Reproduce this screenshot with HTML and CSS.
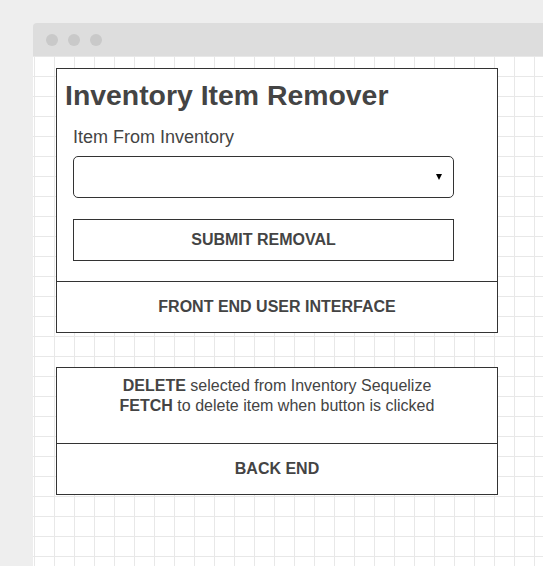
FILE: index.html
```html
<!DOCTYPE html>
<html lang="en">
<head>
<meta charset="utf-8">
<title>Inventory Item Remover</title>
<link rel="stylesheet" href="styles.css">
</head>
<body>
<div class="window">
  <div class="titlebar">
    <span class="dot"></span><span class="dot"></span><span class="dot"></span>
  </div>
  <div class="canvas">
    <section class="card card-front">
      <div class="card-main">
        <h1 class="title">Inventory Item Remover</h1>
        <div class="label">Item From Inventory</div>
        <div class="select"><span class="caret"></span></div>
        <div class="button">SUBMIT REMOVAL</div>
      </div>
      <div class="card-footer">FRONT END USER INTERFACE</div>
    </section>
    <section class="card card-back">
      <div class="card-desc">
        <b>DELETE</b> selected from Inventory Sequelize<br>
        <b>FETCH</b> to delete item when button is clicked
      </div>
      <div class="card-footer">BACK END</div>
    </section>
  </div>
</div>
</body>
</html>
```

FILE: styles.css
```css
html, body {
  margin: 0;
  padding: 0;
  height: 100%;
  overflow: hidden;
}
body {
  background: #eeeeee;
  font-family: "Liberation Sans", Arial, sans-serif;
  color: #444444;
}
.window {
  margin: 23px 0 0 33px;
  height: calc(100% - 23px);
  display: flex;
  flex-direction: column;
  border-top-left-radius: 4px;
  overflow: hidden;
}
.titlebar {
  height: 33px;
  flex: 0 0 33px;
  background: #dddddd;
  display: flex;
  align-items: center;
  gap: 10px;
  padding-left: 13px;
  box-sizing: border-box;
}
.dot {
  width: 12px;
  height: 12px;
  border-radius: 50%;
  background: #c9c9c9;
}
.canvas {
  flex: 1;
  background-color: #ffffff;
  background-image:
    linear-gradient(to right, #e8e8e8 1px, transparent 1px),
    linear-gradient(to bottom, #e8e8e8 1px, transparent 1px);
  background-size: 20px 20px;
  background-position: 1px 0;
  padding: 12px 0 0 23px;
  box-sizing: border-box;
}
.card {
  width: 442px;
  box-sizing: border-box;
  border: 1px solid #333333;
  background: #ffffff;
}
.card-back {
  margin-top: 34px;
}
.card-main {
  height: 212px;
  box-sizing: border-box;
  padding: 11px 0 0 0;
}
.title {
  margin: 0 0 0 8px;
  font-size: 28.4px;
  line-height: 30px;
  font-weight: bold;
  color: #444444;
}
.label {
  margin: 17px 0 0 16px;
  font-size: 18px;
  line-height: 20px;
  color: #444444;
}
.select {
  margin: 9px 0 0 16px;
  width: 381px;
  height: 42px;
  box-sizing: border-box;
  border: 1px solid #333333;
  border-radius: 5px;
  display: flex;
  align-items: center;
  justify-content: flex-end;
  padding-right: 11px;
}
.caret {
  width: 0;
  height: 0;
  border-left: 3.5px solid transparent;
  border-right: 3.5px solid transparent;
  border-top: 6px solid #000000;
}
.button {
  margin: 21px 0 0 16px;
  width: 381px;
  height: 42px;
  box-sizing: border-box;
  border: 1px solid #333333;
  display: flex;
  align-items: center;
  justify-content: center;
  font-size: 16px;
  font-weight: bold;
}
.card-footer {
  height: 51px;
  box-sizing: border-box;
  border-top: 1px solid #333333;
  display: flex;
  align-items: center;
  justify-content: center;
  font-size: 16px;
  font-weight: bold;
}
.card-desc {
  height: 75px;
  box-sizing: border-box;
  padding-top: 8px;
  text-align: center;
  font-size: 16px;
  line-height: 20px;
}
.card-desc b {
  font-weight: bold;
}
```
